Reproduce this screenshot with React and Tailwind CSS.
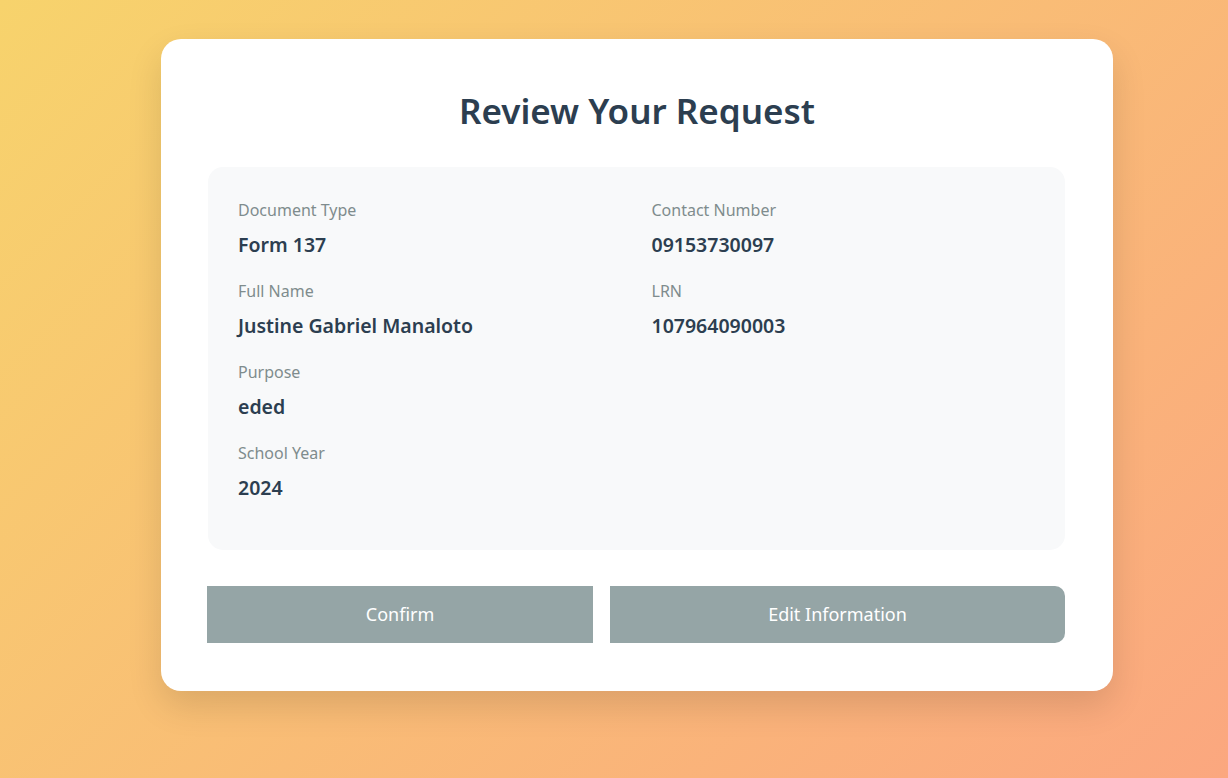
const fields = [
  { label: 'Document Type', value: 'Form 137' },
  { label: 'Contact Number', value: '09153730097' },
  { label: 'Full Name', value: 'Justine Gabriel Manaloto' },
  { label: 'LRN', value: '107964090003' },
  { label: 'Purpose', value: 'eded' },
  { label: '', value: '' },
  { label: 'School Year', value: '2024' },
];

const App = () => {
  return (
    <div
      className="min-h-[778px] w-full bg-[linear-gradient(135deg,#f7d36c_0%,#fba77f_100%)] pt-[39px] pl-[161px]"
      style={{ fontFamily: '"Noto Sans", "Open Sans", sans-serif' }}
    >
      <div className="w-[952px] bg-white rounded-[20px] px-[47px] pt-[47px] pb-[48px] shadow-[0_15px_35px_rgba(0,0,0,0.12)]">
        <h1 className="text-center text-[35px] font-semibold text-[#2c3e50] leading-[1.2] mt-[4px] mb-[35px]">
          Review Your Request
        </h1>

        {/* Details */}
        <div className="bg-[#f8f9fa] rounded-[15px] pt-[30px] px-[30px] pb-[29px] mr-[1px] grid grid-cols-2 gap-x-[30px]">
          {fields.map((f, i) =>
            f.label ? (
              <div key={i} className="mb-[18px]">
                <div className="text-[16px] leading-[26px] text-[#7f8c8d] mb-[7px]">{f.label}</div>
                <div className="text-[19.5px] leading-[30px] font-semibold text-[#2c3e50]">{f.value}</div>
              </div>
            ) : (
              <div key={i} />
            )
          )}
        </div>

        {/* Actions */}
        <div className="flex gap-[17px] mt-[36px] -ml-[1px]">
          <button className="w-[386px] h-[57px] bg-[#95a5a6] text-white text-[18px]">
            Confirm
          </button>
          <button className="w-[455px] h-[57px] bg-[#95a5a6] text-white text-[18px] rounded-r-[10px]">
            Edit Information
          </button>
        </div>
      </div>
    </div>
  );
};

export default App;
